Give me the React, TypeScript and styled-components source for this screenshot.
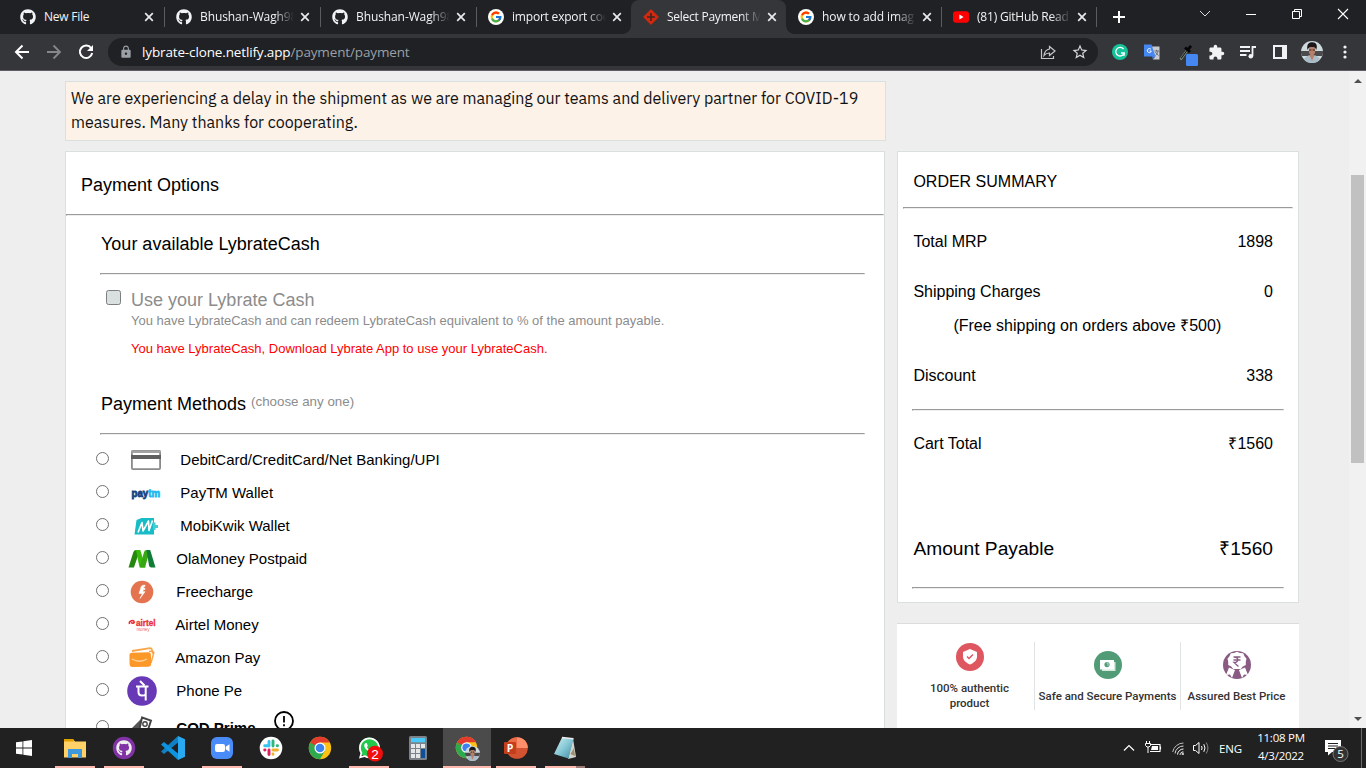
import React from "react";
import styled, { createGlobalStyle, css } from "styled-components";
import { FaGithub, FaWhatsapp } from "react-icons/fa";
import { FcGoogle } from "react-icons/fc";
import { MdExtension, MdLock, MdOutlineStarBorder } from "react-icons/md";

const Global = createGlobalStyle`
  * { box-sizing: border-box; }
  html, body, #root { margin: 0; padding: 0; width: 1366px; height: 768px; overflow: hidden; }
  body { font-family: "Liberation Sans", Arial, sans-serif; color: #000; background: #eee; }
  svg { display: block; flex: none; }
`;

const uiFont = css`font-family: "Open Sans", "Noto Sans", sans-serif;`;

const Screen = styled.div`
  width: 1366px; height: 768px; display: flex; flex-direction: column; overflow: hidden;
`;

/* ---------- browser chrome ---------- */
const TabStrip = styled.div`
  height: 34px; flex: none; display: flex; padding-left: 8px; background: #202124; ${uiFont}
`;
const TabBox = styled.div<{ $active?: boolean; $line?: boolean; $w: number }>`
  width: ${p => p.$w}px; flex: none; height: 34px; display: flex; align-items: center;
  padding-left: 12px; position: relative; color: #f1f3f4;
  ${p => p.$active && css`
    background: #35363a; border-radius: 8px 8px 0 0;
    &::before, &::after {
      content: ""; position: absolute; bottom: 0; width: 8px; height: 8px;
    }
    &::before { left: -8px; background: radial-gradient(circle at 0 0, #202124 7.5px, #35363a 8px); }
    &::after { right: -8px; background: radial-gradient(circle at 100% 0, #202124 7.5px, #35363a 8px); }
  `}
  ${p => p.$line && css`
    &::after { content: ""; position: absolute; right: -1px; top: 7px; width: 1px; height: 20px; background: #5a5c60; }
  `}
`;
const TabTitle = styled.span<{ $fade?: boolean; $ls?: number }>`
  width: 93px; margin-left: 8px; overflow: hidden; white-space: nowrap; font-size: 12px; line-height: 18px;
  letter-spacing: ${p => p.$ls ?? 0}px;
  ${p => p.$fade && css`mask-image: linear-gradient(90deg, #000 74px, transparent 94px);`}
`;
const CloseWrap = styled.span`margin-left: 7px; display: flex;`;
const NewTab = styled.div`width: 46px; display: flex; align-items: center; justify-content: center;`;
const WindowButtons = styled.div`
  margin-left: auto; display: flex; height: 28px; align-items: center;
`;
const WindowButton = styled.div`width: 46px; display: flex; justify-content: center;`;

const Toolbar = styled.div`
  height: 37px; flex: none; display: flex; align-items: center; background: #35363a;
  border-bottom: 1px solid #5f5c66; padding: 0 0 0 14px; ${uiFont}
`;
const NavIcons = styled.div`display: flex; gap: 16px; margin-right: 14px;`;
const Omnibox = styled.div`
  width: 990px; height: 28px; flex: none; border-radius: 14px; background: #202124; display: flex; align-items: center;
  padding: 0 9px 0 11px; color: #9aa0a6;
`;
const Url = styled.span`
  margin-left: 9px; flex: 1; font-size: 13.5px; line-height: 20px; color: #9aa0a6; letter-spacing: -0.14px;
  b { font-weight: 400; color: #fff; }
`;
const OmniActions = styled.div`display: flex; gap: 15px; align-items: center;`;
const Extensions = styled.div`
  display: flex; align-items: center; margin-left: 14px; gap: 16px;
`;
const EyeDropper = styled.div`margin: 6px 0 0 3px;`;
const ExtRest = styled.div`
  display: flex; align-items: center; margin-left: 9px;
  > :nth-child(2) { margin-left: 15px; }
  > :nth-child(3) { margin-left: 17px; }
  > :nth-child(4) { margin-left: 14px; }
  > :nth-child(5) { margin-left: 20px; }
`;

/* ---------- web page ---------- */
const Viewport = styled.div`height: 657px; flex: none; display: flex; background: #eee; overflow: hidden;`;
const Page = styled.main`width: 1349px; height: 657px; padding: 10px 0 0 65px; overflow: hidden;`;
const Notice = styled.p`
  margin: 0 0 10px; width: 821px; height: 60px; padding: 4px 5px; border: 1px solid #dadfdf; background: #fdf2e8;
  font: 16px/24px "IBM Plex Sans", "Open Sans", sans-serif; color: #111;
`;
const NoticeLine = styled.span`display: block; white-space: nowrap;`;
const Columns = styled.div`display: flex; gap: 12px; align-items: flex-start;`;
const Panel = styled.section<{ $w: number; $h: number }>`
  width: ${p => p.$w}px; height: ${p => p.$h}px; flex: none; background: #fff; border: 1px solid #dadfdf;
`;
const Rule = styled.hr<{ $l?: number; $r?: number }>`
  margin: 0 ${p => p.$r ?? 0}px 0 ${p => p.$l ?? 0}px; border: 1px solid; border-color: #9a9a9a #eee #eee #9a9a9a;
  height: 2px;
`;
const PanelTitle = styled.h2`
  margin: 0; height: 62px; padding: 4px 0 0 15px; font-size: 18px; line-height: 58px; font-weight: 400;
`;
const SectionTitle = styled.h3<{ $h: number; $lh: number }>`
  margin: 0; height: ${p => p.$h}px; padding-left: 35px; font-size: 18px; line-height: ${p => p.$lh}px; font-weight: 400;
  display: flex; gap: 5px;
  small { font-size: 13.33px; color: #8c8c8c; line-height: ${p => p.$h - 4}px; }
`;
const CashOption = styled.div`display: flex; padding: 14px 0 16px 40px; color: #8c8c8c;`;
const CheckBox = styled.span`
  width: 15px; height: 15px; margin: 1px 10px 0 0; border: 1px solid #7b7f7f; border-radius: 2.5px; background: #dadfdf;
`;
const CashTitle = styled.div`font-size: 18px; line-height: 22px;`;
const CashNote = styled.div<{ $red?: boolean }>`
  font-size: 13px; line-height: 19px; color: ${p => (p.$red ? "#f00" : "#8c8c8c")};
  margin-top: ${p => (p.$red ? 9 : 0)}px; white-space: nowrap;
`;
const Methods = styled.div`padding: 8px 0 0 30px;`;
const Method = styled.label<{ $h?: number; $bold?: boolean }>`
  display: flex; align-items: center; height: ${p => p.$h ?? 33}px; font-size: 15px; white-space: nowrap;
  font-weight: ${p => (p.$bold ? 700 : 400)};
`;
const Radio = styled.span`
  width: 13px; height: 13px; margin: 0 18px 2px 0; border: 1px solid #6f6f6f; border-radius: 50%; background: #fff;
`;
const MethodLabel = styled.span<{ $gap: number }>`margin-left: ${p => p.$gap}px; line-height: 17px; padding-bottom: 1px;`;
const InfoMark = styled.span`margin: 0 0 13px 18px;`;

const Side = styled.aside`display: flex; flex-direction: column;`;
const SummaryTitle = styled.h2`
  margin: 0; height: 55px; padding: 3px 0 0 15.4px; font-size: 16px; line-height: 53px; font-weight: 400;
`;
const SummaryRow = styled.div<{ $h: number; $size?: number; $indent?: number }>`
  height: ${p => p.$h}px; display: flex; justify-content: space-between;
  padding: 0 25px 0 ${p => 15.4 + (p.$indent ?? 0)}px; font-size: ${p => p.$size ?? 16}px; white-space: nowrap;
  line-height: ${p => p.$h}px;
`;
const Spacer = styled.div<{ $h: number }>`height: ${p => p.$h}px;`;
const Trust = styled.div`
  width: 402px; height: 110px; margin: 20px 0 0; background: #fff; border-top: 1px solid #dcdcdc; display: flex; padding: 18px 0 0 8px;
  font: 500 11.5px/15px Roboto, sans-serif; color: #333;
`;
const TrustItem = styled.div<{ $w: number; $top: number; $line?: boolean }>`
  width: ${p => p.$w}px; flex: none; height: 68px; padding-top: ${p => p.$top}px; display: flex; flex-direction: column; align-items: center;
  text-align: center; white-space: nowrap; border-right: 1px solid ${p => (p.$line ? "#dfe3e3" : "transparent")};
  svg { margin-bottom: 10px; }
`;
const Scrollbar = styled.div`
  width: 17px; height: 657px; background: #f1f1f1; display: flex; flex-direction: column; align-items: center;
  padding: 7px 0 6px;
`;
const Thumb = styled.div`width: 13px; height: 288px; margin: 92px 0 auto; background: #c1c1c1;`;

/* ---------- taskbar ---------- */
const Taskbar = styled.div`
  height: 40px; flex: none; display: flex; background: #212121; color: #fff; ${uiFont}
`;
const StartButton = styled.div`width: 51px; display: flex; align-items: center; padding-left: 16px;`;
const Apps = styled.div`display: flex; gap: 1px;`;
const AppSlot = styled.div<{ $active?: boolean }>`
  width: 48px; height: 40px; background: ${p => (p.$active ? "#4b4b4b" : "transparent")};
  display: flex; flex-direction: column; align-items: center; padding-top: 6px; gap: 4px;
`;
const Underline = styled.div<{ $on?: boolean; $full?: boolean; $split?: boolean }>`
  width: ${p => (p.$full ? 48 : 40)}px; height: 2px;
  background: ${p => p.$on ? (p.$split ? "linear-gradient(90deg,#ffb8ae 31px,#a07a76 31px)" : "#ffb8ae") : "transparent"};
`;
const Tray = styled.div`margin-left: auto; display: flex; align-items: center; font-size: 12px;`;
const BatterySlot = styled.div`margin-left: 10px;`;
const VolumeSlot = styled.div`margin-left: 8px;`;
const NoticeSlot = styled.div`margin-left: 14px;`;
const Lang = styled.span`margin-left: 9px; width: 25px; font-size: 11.5px; letter-spacing: -0.2px;`;
const Clock = styled.div`
  margin: -3px 0 0 8px; width: 58px; text-align: center; font-size: 11.5px; line-height: 18px; letter-spacing: -0.25px; white-space: nowrap;
`;
const ShowDesktop = styled.div`width: 5px; height: 40px; border-left: 1px solid #6a6a6a; margin-left: 11px;`;

/* ---------- icons ---------- */
const GoogleMark = () => (
  <svg width="16" height="16" viewBox="0 0 16 16">
    <circle cx="8" cy="8" r="8" fill="#fff" />
    <g transform="translate(1.5 1.5)"><FcGoogle size={13} /></g>
  </svg>
);
const LybrateMark = () => (
  <svg width="16" height="16" viewBox="0 0 16 16">
    <path d="M8 .6 15.4 8 8 15.4.6 8Z" fill="#d3290f" stroke="#d3290f" strokeLinejoin="round" />
    <path d="M8 4v8M4 8h8" stroke="#3a2524" strokeWidth="1.6" />
  </svg>
);
const YoutubeMark = () => (
  <svg width="16" height="16" viewBox="0 0 16 16">
    <rect y="2.3" width="16" height="11.4" rx="3" fill="#f00" /><path d="M6.4 5.5v5L10.6 8Z" fill="#fff" />
  </svg>
);
const Close = () => (
  <svg width="10" height="10" viewBox="0 0 10 10"><path d="m1.2 1.2 7.6 7.6m0-7.6L1.2 8.8" stroke="#e8eaed" strokeWidth="1.7" /></svg>
);
const Avatar = ({ size }: { size: number }) => (
  <svg width={size} height={size} viewBox="0 0 22 22">
    <clipPath id={"face" + size}><circle cx="11" cy="11" r="11" /></clipPath>
    <g clipPath={`url(#face${size})`}>
      <rect width="22" height="22" fill="#cfdadd" /><path d="M0 10h22v5H0Z" fill="#4b4a4c" />
      <path d="M2 22c0-5 4-8 9-8s9 3 9 8Z" fill="#a9bcc8" /><path d="m8.500 14 2.500 6 2.500-6Z" fill="#b97f68" />
      <ellipse cx="11" cy="9.500" rx="3.200" ry="4.800" fill="#b88068" />
      <path d="M6.500 9C5.300 3 8 1 11.500 1.200S17 4 15.200 9c-.7-2.500-2-3-4.200-3S7.500 6.500 6.500 9Z" fill="#1b181a" />
      <path d="M8 9h2.400m1.200 0H14" stroke="#2b2222" strokeWidth="1.200" />
    </g>
  </svg>
);
const Chrome = ({ size = 24 }: { size?: number }) => (
  <svg width={size} height={size} viewBox="0 0 24 24">
    <circle cx="12" cy="12" r="11.200" fill="#fbc116" />
    <path d="M12 12 2.300 6.400A11.200 11.200 0 0 1 21.700 6.400H12Z" fill="#e33b2e" />
    <path d="M2.300 6.400A11.200 11.200 0 0 0 12 23.200L16.850 14.800 12 12 7.150 14.800Z" fill="#2da94f" />
    <path d="M2.300 6.400 7.150 14.800 12 6.400Z" fill="#e33b2e" /><path d="M2.300 6.400 7.150 14.800 9.500 17 12 12Z" fill="#2da94f" />
    <circle cx="12" cy="12" r="5.500" fill="#fff" /><circle cx="12" cy="12" r="4.300" fill="#3c83f0" />
  </svg>
);

const CardIcon = () => (
  <svg width="34" height="30" viewBox="0 0 34 30">
    <rect x="4.900" y="5.900" width="28.200" height="18.200" rx="1" fill="#fff" stroke="#8a8a8a" strokeWidth="1.800" />
    <path d="M4.500 5.500h29V8h-29Z" fill="#a2a2a2" /><path d="M4 10h30v4H4Z" fill="#5f5f5f" />
  </svg>
);
const PaytmIcon = () => (
  <svg width="34" height="30" viewBox="0 0 34 30">
    <text x="4.500" y="18.500" fontFamily="Liberation Sans, sans-serif" fontWeight="700" fontSize="10.500" textLength="28.500" lengthAdjust="spacingAndGlyphs" strokeWidth=".8">
      <tspan fill="#15427e" stroke="#15427e">pay</tspan><tspan fill="#21b9ee" stroke="#21b9ee">tm</tspan>
    </text>
  </svg>
);
const MobiIcon = () => (
  <svg width="34" height="30" viewBox="0 0 34 30">
    <path d="m9.500 9 5-2H27v16.500H7.500Z" fill="#17bcc6" /><path d="M26 11.500h2.500v2.500H31v3h-2.500v2H26Z" fill="#45ccd3" />
    <path d="m11 21.500 4-10 1 8.500 5.500-10 .5 9.500 3.500-10" fill="none" stroke="#fff" strokeWidth="1.600" strokeLinejoin="round" />
  </svg>
);
const OlaIcon = () => (
  <svg width="34" height="30" viewBox="0 0 34 30">
    <path d="M1.500 23.500h5.400L13 6H9.300Q7 6 6.300 8.300Z" fill="#25870f" />
    <path d="M9 6h4.300l5.200 17.500H14Q12.500 23.500 12 21Z" fill="#39bb0b" />
    <path d="M12.500 23.500H18L23 6h-3.500Q17.500 6 17 8.300Z" fill="#39a713" />
    <path d="M19.500 6h3.700l5.300 17.500h-4.200q-1.800 0-2.300-2Z" fill="#117c35" />
  </svg>
);
const FreechargeIcon = () => (
  <svg width="34" height="30" viewBox="0 0 34 30">
    <circle cx="15" cy="15" r="11.300" fill="#e4744f" />
    <path d="M18 8.200c-3.200-.4-4 1-4.300 3.300L12 16.500h3.500L13 21.500l5-6.800h-2.300l.8-2.200h1.500v-1.200h-1.500c0-1.200.2-1.800 1.500-1.800Z" fill="#fff" stroke="#fff" strokeWidth=".6" />
  </svg>
);
const AirtelIcon = () => (
  <svg width="34" height="30" viewBox="0 0 34 30" fontFamily="Liberation Sans, sans-serif" fill="#ea3038">
    <path d="M2.500 14c-1-3.500 4.500-4.500 4.700-2 .1 1.700-2.700 1.700-2.500.2" fill="none" stroke="#ea3038" strokeWidth="1.600" />
    <text x="9" y="15.700" fontSize="8.500" fontWeight="700" textLength="19.500" lengthAdjust="spacingAndGlyphs" stroke="#ea3038" strokeWidth=".3">airtel</text>
    <text x="9.500" y="20.500" fontSize="4.500" textLength="13" opacity=".75">money</text>
  </svg>
);
const AmazonIcon = () => (
  <svg width="34" height="30" viewBox="0 0 34 30">
    <path d="m5 8 18-2.800q1.800 0 2 1.700l1 4" fill="none" stroke="#f8a64b" strokeWidth="1.800" />
    <path d="m22 8.300 4 .3q1 0 .7 1.600L24 20" fill="none" stroke="#f8a64b" strokeWidth="1.500" />
    <rect x="2.500" y="9.500" width="21.500" height="14.300" rx="2.500" fill="#fb9827" transform="rotate(-1 13 16)" />
    <path d="M5 16q7.500 4.500 15 0" fill="none" stroke="#ffd39c" strokeWidth="1.300" />
  </svg>
);
const PhonePeIcon = () => (
  <svg width="34" height="30" viewBox="0 0 34 30">
    <circle cx="15" cy="15" r="14.800" fill="#6739b7" />
    <path d="M9 10.500h12.500M11.500 10.500v5.500q0 3.500 3.500 3.500 2.200 0 3.700-1M18.700 10.500v14M17.500 9.500 13 5" fill="none" stroke="#fff" strokeWidth="2" />
  </svg>
);
const CodIcon = () => (
  <svg width="34" height="30" viewBox="0 0 34 30">
    <path d="m5 15 9-9 4 9-3 11H9Z" fill="#555" /><path d="m15 4.500 9 3-4.500 14-7.500-3Z" fill="#fff" stroke="#444" strokeWidth="1.900" />
    <circle cx="18" cy="11" r="2.200" fill="none" stroke="#444" strokeWidth="1.400" />
  </svg>
);

const tabs = [
  { icon: <FaGithub size={16} />, title: "New File", w: 156, line: true, ls: -0.25 },
  { icon: <FaGithub size={16} />, title: "Bhushan-Wagh98", w: 156, fade: true, line: true, ls: -0.1 },
  { icon: <FaGithub size={16} />, title: "Bhushan-Wagh98", w: 156, fade: true, line: true, ls: -0.1 },
  { icon: <GoogleMark />, title: "import export cod", w: 155, fade: true, ls: -0.2 },
  { icon: <LybrateMark />, title: "Select Payment M", w: 155, fade: true, active: true, ls: -0.25 },
  { icon: <GoogleMark />, title: "how to add imag", w: 155, fade: true, line: true, ls: -0.1 },
  { icon: <YoutubeMark />, title: "(81) GitHub Read", w: 155, fade: true, line: true, ls: -0.2 },
];

const methods = [
  { icon: <CardIcon />, name: "DebitCard/CreditCard/Net Banking/UPI", gap: 19.3 },
  { icon: <PaytmIcon />, name: "PayTM Wallet", gap: 19.3 },
  { icon: <MobiIcon />, name: "MobiKwik Wallet", gap: 19.3 },
  { icon: <OlaIcon />, name: "OlaMoney Postpaid", gap: 15.3 },
  { icon: <FreechargeIcon />, name: "Freecharge", gap: 15.3 },
  { icon: <AirtelIcon />, name: "Airtel Money", gap: 14.3 },
  { icon: <AmazonIcon />, name: "Amazon Pay", gap: 14.3 },
  { icon: <PhonePeIcon />, name: "Phone Pe", gap: 15.3 },
];

const BrowserTabs = () => (
  <TabStrip>
    {tabs.map((t, i) => (
      <TabBox key={i} $w={t.w} $active={t.active} $line={t.line}>
        {t.icon}
        <TabTitle $fade={t.fade} $ls={t.ls}>{t.title}</TabTitle>
        <CloseWrap><Close /></CloseWrap>
      </TabBox>
    ))}
    <NewTab><svg width="14" height="14"><path d="M7 1v12M1 7h12" stroke="#fff" strokeWidth="2" /></svg></NewTab>
    <WindowButtons>
      <WindowButton><svg width="12" height="8"><path d="m1 1 5 5 5-5" fill="none" stroke="#ddd" /></svg></WindowButton>
      <WindowButton><svg width="10" height="3"><path d="M0 1.500h10" stroke="#fff" /></svg></WindowButton>
      <WindowButton><svg width="10" height="10"><path d="M.5 2.500h7v7h-7ZM2.500 2.500v-2h7v7h-2" fill="none" stroke="#fff" /></svg></WindowButton>
      <WindowButton><svg width="12" height="12"><path d="m1 1 10 10m0-10L1 11" stroke="#fff" strokeWidth="1.100" /></svg></WindowButton>
    </WindowButtons>
  </TabStrip>
);

const BrowserToolbar = () => (
  <Toolbar>
    <NavIcons>
      <svg width="16" height="16" viewBox="0 0 16 16"><path d="M15 8H2m6.500-6.500L2 8l6.500 6.500" fill="none" stroke="#fff" strokeWidth="2" /></svg>
      <svg width="16" height="16" viewBox="0 0 16 16"><path d="M1 8h13M7.500 1.500 14 8l-6.500 6.500" fill="none" stroke="#85878a" strokeWidth="1.800" /></svg>
      <svg width="16" height="16" viewBox="0 0 16 16"><path d="M13.200 4.200A6.200 6.200 0 1 0 14.200 9" fill="none" stroke="#fff" strokeWidth="2" /><path d="M15 1v6H9Z" fill="#fff" /></svg>
    </NavIcons>
    <Omnibox>
      <MdLock size={14} />
      <Url><b>lybrate-clone.netlify.app</b>/payment/payment</Url>
      <OmniActions>
        <svg width="16" height="16" viewBox="0 0 16 16" fill="none" stroke="#c4c7ca" strokeWidth="1.200">
          <path d="M1.500 5v9.500h12V12" /><path d="M9.500 2.500 15 7l-5.500 4.500V9C7 9 5.500 9.500 4 11.500 4.500 7.500 6.500 5.500 9.500 5Z" />
        </svg>
        <MdOutlineStarBorder size={18} color="#d4d6d8" />
      </OmniActions>
    </Omnibox>
    <Extensions>
      <svg width="16" height="16" viewBox="0 0 16 16"><circle cx="8" cy="8" r="8" fill="#15c39a" /><path d="M11.600 5.200A4.300 4.300 0 1 0 12.200 9H9M12.200 9v2.800" fill="none" stroke="#fff" strokeWidth="1.300" /></svg>
      <svg width="16" height="16" viewBox="0 0 16 16"><path d="M7 2.500h8.500v13H9Z" fill="#c9cbce" /><path d="M10.500 7h4.500M12.500 5.800V7m1.500 0c-.6 2.500-1.500 3.500-2.500 4.500m0-3.500c.8 1.500 1.700 2.500 3 3.500" stroke="#66707c" fill="none" /><path d="M0 .5h7.500L11.500 12.500H0Z" fill="#4688f1" /><path d="M8 12.500h3.500l-2.500 3Z" fill="#3367d6" /><path d="M7 5.500A2 2 0 1 0 7.300 7H5.500" fill="none" stroke="#fff" /></svg>
      <EyeDropper>
        <svg width="20" height="22" viewBox="0 0 20 22"><path d="m1.500 15.500 7-9.500" stroke="#7f9a86" strokeWidth="2.200" /><path d="m2 14.500 6-8" stroke="#1c1d1e" strokeWidth="1.200" /><path d="m6 3.500 5 4.500M8.500 6 12 1.800" stroke="#050505" strokeWidth="2.800" /><rect x="7" y="10" width="12" height="12" rx="1.500" fill="#4688f1" /></svg>
      </EyeDropper>
    </Extensions>
    <ExtRest>
      <MdExtension size={17} color="#f1f3f4" />
      <svg width="16" height="14" viewBox="0 0 16 14"><path d="M0 2h10M0 6h10M0 10h6.500" stroke="#f1f3f4" strokeWidth="1.800" /><path d="M12.500 11V2H16" fill="none" stroke="#f1f3f4" strokeWidth="1.800" /><circle cx="10.800" cy="11.200" r="2.300" fill="#f1f3f4" /></svg>
      <svg width="14" height="14" viewBox="0 0 14 14"><path d="M0 0h14v14H0ZM2 2v10h7V2Z" fill="#f1f3f4" fillRule="evenodd" /></svg>
      <Avatar size={22} />
      <svg width="4" height="14" fill="#f1f3f4"><circle cx="2" cy="2" r="1.600" /><circle cx="2" cy="7" r="1.600" /><circle cx="2" cy="12" r="1.600" /></svg>
    </ExtRest>
  </Toolbar>
);

const PaymentPanel = () => (
  <Panel $w={820} $h={640}>
    <PanelTitle>Payment Options</PanelTitle>
    <Rule />
    <SectionTitle $h={57} $lh={56}>Your available LybrateCash</SectionTitle>
    <Rule $l={34} $r={19} />
    <CashOption>
      <CheckBox />
      <div>
        <CashTitle>Use your Lybrate Cash</CashTitle>
        <CashNote>You have LybrateCash and can redeem LybrateCash equivalent to % of the amount payable.</CashNote>
        <CashNote $red>You have LybrateCash, Download Lybrate App to use your LybrateCash.</CashNote>
      </div>
    </CashOption>
    <SectionTitle $h={59} $lh={60}>Payment Methods <small>(choose any one)</small></SectionTitle>
    <Rule $l={34} $r={19} />
    <Methods>
      {methods.map(m => (
        <Method key={m.name}><Radio />{m.icon}<MethodLabel $gap={m.gap}>{m.name}</MethodLabel></Method>
      ))}
      <Method $h={41} $bold>
        <Radio /><CodIcon /><MethodLabel $gap={15.3}>COD Prime</MethodLabel>
        <InfoMark>
          <svg width="20" height="20"><circle cx="10" cy="10" r="9" fill="none" stroke="#000" strokeWidth="1.800" /><path d="M10 5v6.500M10 13.200v2" stroke="#000" strokeWidth="1.800" /></svg>
        </InfoMark>
      </Method>
    </Methods>
  </Panel>
);

const OrderSummary = () => (
  <Panel $w={402} $h={452}>
    <SummaryTitle>ORDER SUMMARY</SummaryTitle>
    <Rule $l={5} $r={5} />
    <Spacer $h={8} />
    <SummaryRow $h={50}><span>Total MRP</span><span>1898</span></SummaryRow>
    <SummaryRow $h={50}><span>Shipping Charges</span><span>0</span></SummaryRow>
    <SummaryRow $h={18} $indent={40}><span>(Free shipping on orders above ₹500)</span></SummaryRow>
    <Spacer $h={16} />
    <SummaryRow $h={50}><span>Discount</span><span>338</span></SummaryRow>
    <Spacer $h={8} />
    <Rule $l={14} $r={14} />
    <Spacer $h={8} />
    <SummaryRow $h={50}><span>Cart Total</span><span>₹1560</span></SummaryRow>
    <Spacer $h={54} />
    <SummaryRow $h={52} $size={19.2}><span>Amount Payable</span><span>₹1560</span></SummaryRow>
    <Spacer $h={12} />
    <Rule $l={14} $r={14} />
  </Panel>
);

const TrustBadges = () => (
  <Trust>
    <TrustItem $w={130} $top={0.6} $line>
      <svg width="28" height="28" viewBox="0 0 28 28"><circle cx="14" cy="14" r="14" fill="#de5760" /><path d="m14 6 7 3v4.500c0 4-3.500 6.500-7 8-3.500-1.500-7-4-7-8V9Z" fill="#fff" /><path d="m11 13.500 2 2 4-4" fill="none" stroke="#de5760" strokeWidth="1.500" /></svg>
      <span>100% authentic<br />product</span>
    </TrustItem>
    <TrustItem $w={146} $top={8.6} $line>
      <svg width="28" height="28" viewBox="0 0 28 28"><circle cx="14" cy="14" r="14" fill="#519c77" /><path d="M8 18.500V20h13.500v-9H20" fill="#d5e8de" /><rect x="6" y="9" width="14" height="9.500" fill="#fff" /><circle cx="13" cy="13.600" r="2.600" fill="#519c77" /><path d="M12.500 12h1.500v3" stroke="#cfe3d8" strokeWidth=".8" fill="none" /></svg>
      <span>Safe and Secure Payments</span>
    </TrustItem>
    <TrustItem $w={112} $top={8.6}>
      <svg width="28" height="28" viewBox="0 0 28 28"><circle cx="14" cy="14" r="14" fill="#895b83" /><path d="m14 .8 3 1.200 3.200.2 1.300 3 2 2.500-.7 3 0 3.200-3 1.600-2 2.400H10.200l-2-2.400-3-1.600v-3.200l-.7-3 2-2.500 1.300-3L11 2Z" fill="#fff" /><path d="m6 16.500 6 2.500-3 8-2-3.500-4 .5ZM22 16.500 16 19l3 8 2-3.500 4 .5Z" fill="#fff" /><path d="M10.500 6h7M10.500 9h7M11 6c5 0 5 5.500 0 5.500l4.500 4" fill="none" stroke="#895b83" strokeWidth="1.300" /></svg>
      <span>Assured Best Price</span>
    </TrustItem>
  </Trust>
);

const WindowsTaskbar = () => (
  <Taskbar>
    <StartButton>
      <svg width="16" height="16" viewBox="0 0 16 16" fill="#fff"><path d="m0 2.300 6.500-.9v6.200H0ZM7.300 1.300 16 0v7.600H7.300ZM0 8.400h6.500v6.200L0 13.700ZM7.300 8.400H16V16l-8.700-1.300Z" /></svg>
    </StartButton>
    <Apps>
      <AppSlot>
        <svg width="24" height="28" viewBox="0 0 24 28"><path d="M1 5h9l2 2.500h11v16H1Z" fill="#ffd166" /><path d="M1 5h9l1 2.500H1Z" fill="#e1a200" /><path d="M5 15h14v9h-4v-4H9v4H5Z" fill="#3f97dc" /></svg>
        <Underline $on />
      </AppSlot>
      <AppSlot>
        <svg width="24" height="28" viewBox="0 0 24 28"><circle cx="12" cy="14" r="11.200" fill="#8132a5" /><g transform="translate(4 6)"><FaGithub size={16} color="#eee" /></g></svg>
        <Underline $on />
      </AppSlot>
      <AppSlot>
        <svg width="26" height="28" viewBox="0 0 26 28"><path d="m18 2 7 3.200v17.600L18 26Z" fill="#29a9f2" /><path d="M18 2v6.500L4 20 1 17.500Z" fill="#1180c5" /><path d="M18 26v-6.500L4 8 1 10.500Z" fill="#0c94df" /></svg>
        <Underline />
      </AppSlot>
      <AppSlot>
        <svg width="24" height="28" viewBox="0 0 24 28"><rect x="1" y="3" width="22" height="22" rx="6" fill="#4a8cf7" /><rect x="5" y="10" width="10" height="8" rx="2" fill="#fff" /><path d="m15.700 12.800 3.800-2.600v7.600l-3.800-2.600Z" fill="#fff" /></svg>
        <Underline $on />
      </AppSlot>
      <AppSlot>
        <svg width="24" height="28" viewBox="0 0 24 28"><circle cx="12" cy="14" r="11.300" fill="#fff" /><g strokeWidth="2.900" strokeLinecap="round"><path d="M10 7.500V12M5.700 11.700H10" stroke="#36c5f0" /><path d="M14 7v5M18.500 11.700h-.3" stroke="#2eb67d" /><path d="M14 16h4.500M14 20.300V20" stroke="#ecb22e" /><path d="M10 16v4.500M5.700 16H6" stroke="#e01e5a" /></g></svg>
        <Underline />
      </AppSlot>
      <AppSlot><svg width="24" height="28"><g transform="translate(0 2)"><Chrome /></g></svg><Underline /></AppSlot>
      <AppSlot>
        <svg width="30" height="28" viewBox="0 0 30 28"><circle cx="15" cy="13.500" r="10" fill="#24c94b" /><g transform="translate(3.500 2)"><FaWhatsapp size={24} color="#fff" /></g><circle cx="21" cy="19.700" r="7.900" fill="#f20d0d" /><text x="21" y="24.500" textAnchor="middle" fontSize="13.500" fill="#fff" fontFamily="Liberation Sans, sans-serif">2</text></svg>
        <Underline $on />
      </AppSlot>
      <AppSlot>
        <svg width="18" height="28" viewBox="0 0 18 28"><rect y="2" width="18" height="24" rx="1.500" fill="#7b828a" /><rect x="2" y="4" width="14" height="4.300" fill="#49c9f7" />{[10, 15, 20].map(y => [2, 7, 12].map(x => <rect key={`${x}-${y}`} x={x} y={y} width="4" height="4" fill="#e4e6e8" />))}<rect x="12" y="15" width="4" height="9" fill="#0c4f9b" /></svg>
        <Underline />
      </AppSlot>
      <AppSlot $active>
        <svg width="26" height="28"><g transform="translate(1 2)"><Chrome size={23} /></g><g transform="translate(11 12)"><Avatar size={15} /></g></svg>
        <Underline $on $full />
      </AppSlot>
      <AppSlot>
        <svg width="26" height="28" viewBox="0 0 26 28"><circle cx="14" cy="14" r="10.800" fill="#d35230" /><path d="M14 3.200A10.800 10.800 0 0 1 24.800 14H14Z" fill="#ff8f6b" /><path d="M14 3.200V14H3.200A10.800 10.800 0 0 1 14 3.200Z" fill="#ed6c47" /><rect x="1" y="8" width="12" height="12" rx="1" fill="#c43e1c" /><text x="7" y="17.800" textAnchor="middle" fontSize="10.500" fontWeight="700" fill="#fff" fontFamily="Open Sans, sans-serif">P</text></svg>
        <Underline $on />
      </AppSlot>
      <AppSlot>
        <svg width="24" height="28" viewBox="0 0 24 28">
          <linearGradient id="pad" x2="1" y2="1"><stop stopColor="#d3f1f4" /><stop offset=".5" stopColor="#86c8d6" /><stop offset="1" stopColor="#3f8ba0" /></linearGradient>
          <path d="M20 4.500 23 23l-8 2Z" fill="#d5d5d0" /><path d="M17.500 20 21 14l1 8Z" fill="#9b8f70" />
          <path d="m9 3.500 11.500 1.200L15.500 24.500 1 20Z" fill="url(#pad)" /><path d="m9 3.500 11.500 1.200" stroke="#eee" strokeWidth="1.500" />
        </svg>
        <Underline $on $split />
      </AppSlot>
    </Apps>
    <Tray>
      <svg width="12" height="8"><path d="m1 6.500 5-5 5 5" fill="none" stroke="#fff" strokeWidth="1.200" /></svg>
      <BatterySlot>
        <svg width="17" height="14" viewBox="0 0 17 14"><path d="M5.500 3.500h9.500v7H5M15.500 5.500v3" fill="none" stroke="#fff" strokeWidth="1.100" /><path d="M7 5h6v4H6Z" fill="#fff" /><path d="M1.500 0v2M4.500 0v2M.5 2.500h5v2l-1.500 1.500H2L.5 4.500ZM3 6v6" fill="none" stroke="#fff" /></svg>
      </BatterySlot>
      <BatterySlot>
        <svg width="13" height="13" viewBox="0 0 13 13" fill="none" stroke="#bbb"><path d="M.7 10A11 11 0 0 1 11.500 1" /><path d="M3 11.500A8.500 8.500 0 0 1 11.500 4" stroke="#ddd" /><path d="M5.500 12.500A6 6 0 0 1 11.500 7" stroke="#fff" /><path d="M8 12.800A3 3 0 0 1 11.500 10" stroke="#fff" /><circle cx="10.800" cy="12" r=".9" fill="#fff" /></svg>
      </BatterySlot>
      <VolumeSlot>
        <svg width="17" height="14" viewBox="0 0 17 14" fill="none" stroke="#fff"><path d="M.5 4.500h2l3.500-3v11l-3.500-3h-2Z" /><path d="M8.500 5q1.200 2 0 4M10.800 3.200q2.400 3.800 0 7.600" /><path d="M13.200 1.500q3.500 5.500 0 11" stroke="#888" /></svg>
      </VolumeSlot>
      <Lang>ENG</Lang>
      <Clock>11:08 PM<br />4/3/2022</Clock>
      <NoticeSlot>
        <svg width="26" height="28" viewBox="0 0 26 28"><path d="M1 6h16v12H8l-4 3.500V18H1Z" fill="#fff" /><path d="M4 9.500h10M4 12h10M4 14.500h7" stroke="#212121" /><circle cx="16.500" cy="20" r="7.500" fill="#333" stroke="#777" /><text x="16.500" y="24.200" textAnchor="middle" fontSize="11.500" fill="#fff" fontFamily="Open Sans, sans-serif">5</text></svg>
      </NoticeSlot>
      <ShowDesktop />
    </Tray>
  </Taskbar>
);

export default function App() {
  return (
    <Screen>
      <Global />
      <BrowserTabs />
      <BrowserToolbar />
      <Viewport>
        <Page>
          <Notice>
            <NoticeLine>We are experiencing a delay in the shipment as we are managing our teams and delivery partner for COVID-19</NoticeLine>
            <NoticeLine>measures. Many thanks for cooperating.</NoticeLine>
          </Notice>
          <Columns>
            <PaymentPanel />
            <Side>
              <OrderSummary />
              <TrustBadges />
            </Side>
          </Columns>
        </Page>
        <Scrollbar>
          <svg width="8" height="5"><path d="M0 5 4 1l4 4Z" fill="#505050" /></svg>
          <Thumb />
          <svg width="8" height="5"><path d="m0 0 4 4 4-4Z" fill="#505050" /></svg>
        </Scrollbar>
      </Viewport>
      <WindowsTaskbar />
    </Screen>
  );
}
